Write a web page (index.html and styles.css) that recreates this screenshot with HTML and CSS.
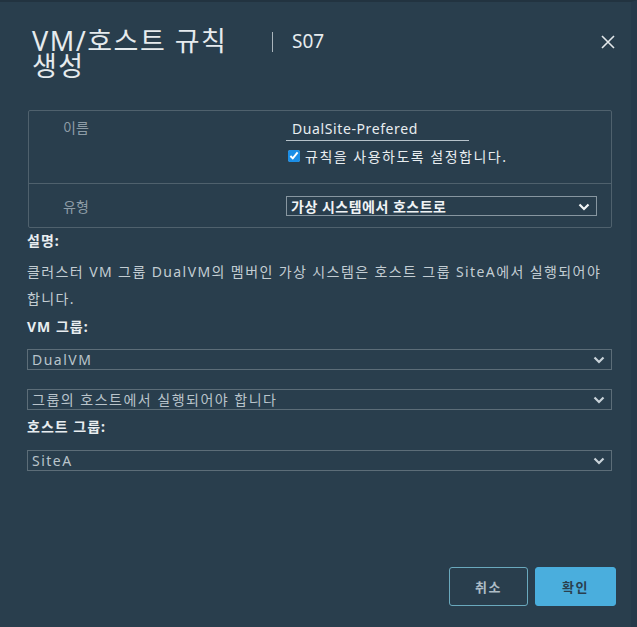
FILE: index.html
```html
<!DOCTYPE html>
<html lang="ko">
<head>
  <meta charset="UTF-8">
  <meta name="viewport" content="width=device-width, initial-scale=1.0">
  <title>VM/호스트 규칙 생성</title>
  <link rel="stylesheet" href="styles.css">
</head>
<body>

  <div class="modal">
    <div class="modal-header">
      <h1 class="modal-title">VM/호스트 규칙 생성</h1>
      <span class="title-sep"></span>
      <span class="title-sub">S07</span>
      <button class="btn-close" type="button" aria-label="닫기">
        <svg width="16" height="16" viewBox="0 0 16 16"><path d="M2 2 L14 14 M14 2 L2 14" stroke="#e3e8eb" stroke-width="1.6" fill="none"/></svg>
      </button>
    </div>

    <div class="form-box">
      <div class="form-row row-name">
        <label class="row-label" for="ruleName">이름</label>
        <div class="row-field">
          <input class="text-input" type="text" id="ruleName" value="DualSite-Prefered">
          <label class="check">
            <input type="checkbox" checked>
            <span>규칙을 사용하도록 설정합니다.</span>
          </label>
        </div>
      </div>
      <div class="form-row row-type">
        <label class="row-label" for="ruleType">유형</label>
        <div class="row-field">
          <div class="select-wrap type-select">
            <select id="ruleType">
              <option>가상 시스템에서 호스트로</option>
            </select>
            <svg class="chevron" width="12" height="8" viewBox="0 0 12 8"><path d="M1.5 1.5 L6 6 L10.5 1.5" stroke="#f2f5f7" stroke-width="2.2" fill="none"/></svg>
          </div>
        </div>
      </div>
    </div>

    <div class="details">
      <p class="section-label">설명:</p>
      <p class="desc">클러스터 VM 그룹 DualVM의 멤버인 가상 시스템은 호스트 그룹 SiteA에서 실행되어야 합니다.</p>
      <p class="section-label">VM 그룹:</p>

      <div class="select-wrap group-select">
        <select><option>DualVM</option></select>
        <svg class="chevron" width="12" height="8" viewBox="0 0 12 8"><path d="M1.5 1.5 L6 6 L10.5 1.5" stroke="#c9d3d9" stroke-width="2.2" fill="none"/></svg>
      </div>

      <div class="select-wrap group-select second">
        <select><option>그룹의 호스트에서 실행되어야 합니다</option></select>
        <svg class="chevron" width="12" height="8" viewBox="0 0 12 8"><path d="M1.5 1.5 L6 6 L10.5 1.5" stroke="#c9d3d9" stroke-width="2.2" fill="none"/></svg>
      </div>

      <p class="section-label host-label">호스트 그룹:</p>

      <div class="select-wrap group-select third">
        <select><option>SiteA</option></select>
        <svg class="chevron" width="12" height="8" viewBox="0 0 12 8"><path d="M1.5 1.5 L6 6 L10.5 1.5" stroke="#c9d3d9" stroke-width="2.2" fill="none"/></svg>
      </div>
    </div>

    <div class="modal-footer">
      <button class="btn btn-outline" type="button">취소</button>
      <button class="btn btn-primary" type="button">확인</button>
    </div>
  </div>

</body>
</html>
```

FILE: styles.css
```css
body {
    margin: 0;
    background-color: #293e4d;
    font-family: "Noto Sans", "Noto Sans CJK KR", sans-serif;
    color: #d7dee3;
}
.modal {
    height: 627px;
    box-sizing: border-box;
    padding: 28px 19px 0 27px;
    border-top: 2px solid #223340;
    border-right: 6px solid #26394a;
    display: flex;
    flex-direction: column;
}
.modal-header {
    display: flex;
    align-items: flex-start;
    height: 80px;
    margin-top: -2px;
}
.modal-title {
    margin: 0 0 0 5px;
    width: 215px;
    font-size: 27px;
    line-height: 25px;
    font-weight: 400;
    letter-spacing: 1.5px;
    color: #e6ebee;
    word-break: keep-all;
}
.title-sep {
    width: 1px;
    height: 20px;
    margin: 4px 0 0 25px;
    background-color: #aab5bc;
}
.title-sub {
    margin-left: 19px;
    font-size: 19px;
    line-height: 26px;
    color: #e6ebee;
}
.btn-close {
    margin-left: auto;
    margin-top: 6px;
    margin-right: -4px;
    background: none;
    border: none;
    padding: 0;
    cursor: pointer;
}
.form-box {
    margin-top: 2px;
    margin-left: 1px;
    border: 1px solid #4f616d;
    border-radius: 2px;
}
.form-row {
    display: grid;
    grid-template-columns: 257px 1fr;
}
.row-name {
    height: 72px;
    border-bottom: 1px solid #4f616d;
}
.row-type {
    height: 43px;
    align-items: center;
}
.row-label {
    padding-left: 34px;
    font-size: 14px;
    color: #8d9ca6;
}
.row-name .row-label {
    padding-top: 6px;
}
.row-field {
    padding-right: 14px;
}
.text-input {
    display: block;
    box-sizing: border-box;
    width: 183px;
    height: 30px;
    padding: 6px 0 0 6px;
    margin: 0;
    background: none;
    border: none;
    border-bottom: 1px solid #b6c2ca;
    font-family: inherit;
    font-size: 14px;
    letter-spacing: 0.6px;
    color: #e8edf0;
    outline: none;
}
.check {
    display: flex;
    align-items: center;
    gap: 5px;
    margin-top: 5px;
    margin-left: 2px;
    font-size: 14px;
    letter-spacing: 1.5px;
    color: #e8edf0;
}
.check input {
    margin: 0;
    width: 12px;
    height: 12px;
    accent-color: #1b8ee6;
}
.select-wrap {
    position: relative;
}
.select-wrap select {
    display: block;
    width: 100%;
    height: 21px;
    box-sizing: border-box;
    padding: 0 0 0 4px;
    margin: 0;
    appearance: none;
    -webkit-appearance: none;
    background: transparent;
    border: 1px solid #5c6d78;
    border-radius: 0;
    font-family: inherit;
    font-size: 14px;
    line-height: 19px;
    letter-spacing: 1.5px;
    color: #b9c4cb;
    outline: none;
}
.chevron {
    position: absolute;
    right: 7px;
    top: 7px;
}
.type-select select {
    height: 20px;
    color: #f0f3f5;
    font-weight: 700;
    letter-spacing: 0.5px;
    border-color: #8796a0;
}
.details {
    display: flex;
    flex-direction: column;
}
.section-label {
    margin: 0;
    font-size: 14px;
    line-height: 27px;
    font-weight: 700;
    letter-spacing: 1px;
    color: #e8edf0;
}
.details .section-label:first-child {
    margin-top: -1px;
}
.desc {
    margin: 4px 0 1px;
    font-size: 14px;
    line-height: 27px;
    letter-spacing: 1.4px;
    color: #c3cdd3;
    padding-right: 10px;
}
.group-select {
    margin-top: 9px;
}
.group-select.second {
    margin-top: 19px;
}
.host-label {
    margin-top: 3px;
}
.group-select.third {
    margin-top: 10px;
}
.modal-footer {
    margin-top: auto;
    margin-bottom: 21px;
    display: flex;
    justify-content: flex-end;
    gap: 7px;
    margin-right: -4px;
}
.btn {
    height: 39px;
    border-radius: 3px;
    font-family: inherit;
    font-size: 13px;
    font-weight: 700;
    letter-spacing: 1.5px;
    cursor: pointer;
}
.btn-outline {
    width: 79px;
    background: none;
    border: 1px solid #6aa9bd;
    color: #aebdc6;
}
.btn-primary {
    width: 81px;
    background-color: #4aaedd;
    border: 1px solid #4aaedd;
    color: #2a3f4e;
}
```
